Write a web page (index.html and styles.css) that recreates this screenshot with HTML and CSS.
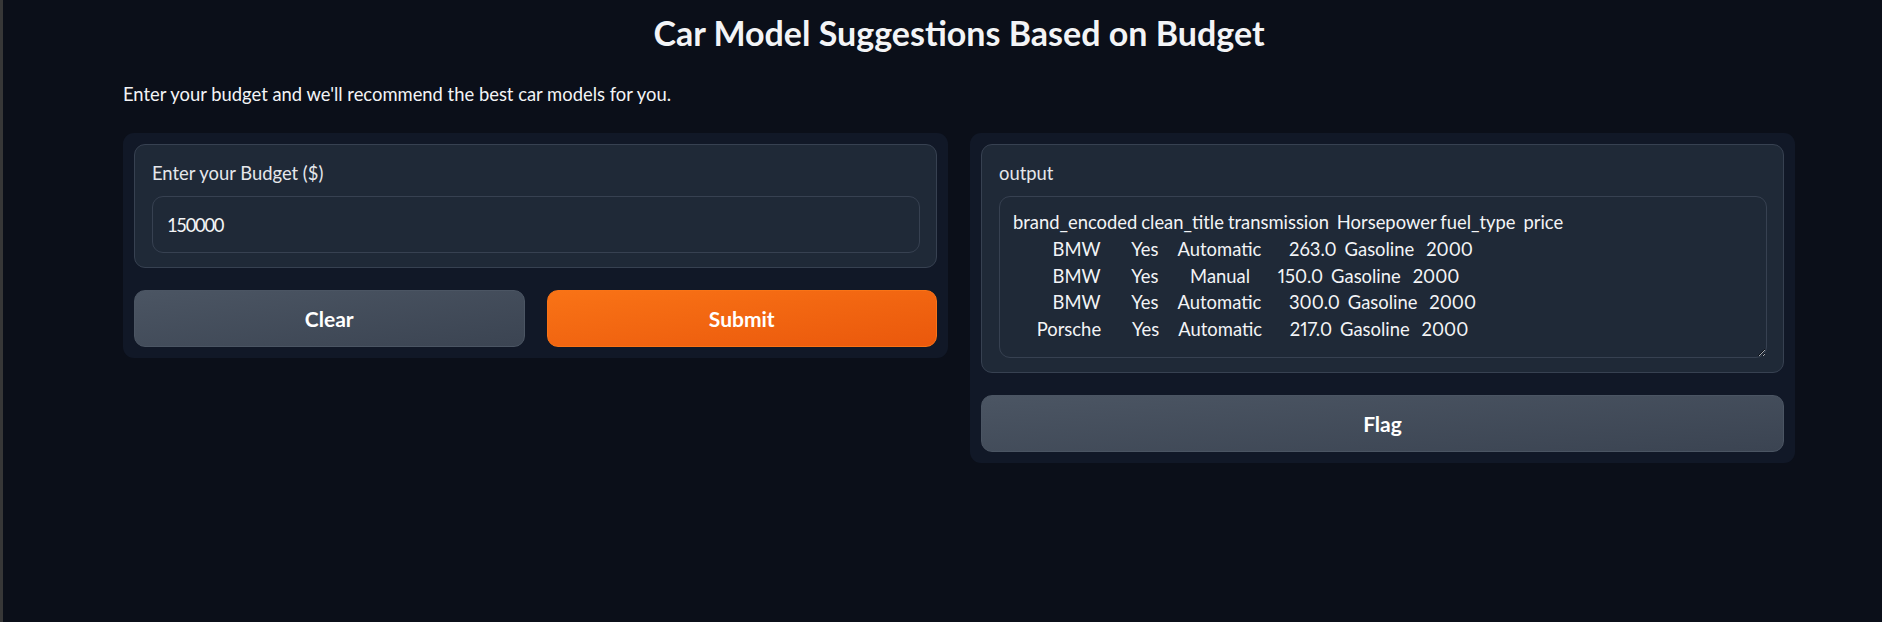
FILE: index.html
```html
<!DOCTYPE html>
<html lang="en">
<head>
<meta charset="utf-8">
<title>Car Model Suggestions Based on Budget</title>
<link rel="stylesheet" href="styles.css">
</head>
<body>
<div class="app">
  <h1 class="title">Car Model Suggestions Based on Budget</h1>
  <p class="desc">Enter your budget and we'll recommend the best car models for you.</p>
  <div class="row">
    <div class="panel">
      <div class="block">
        <label class="label" for="budget">Enter your Budget ($)</label>
        <input class="input" id="budget" type="text" value="150000">
      </div>
      <div class="btn-row">
        <button class="btn btn-secondary">Clear</button>
        <button class="btn btn-primary">Submit</button>
      </div>
    </div>
    <div class="panel">
      <div class="block">
        <label class="label" for="output">output</label>
        <textarea class="textarea" id="output" readonly>
brand_encoded clean_title transmission  Horsepower fuel_type  price
          BMW        Yes     Automatic       263.0  Gasoline   2000
          BMW        Yes        Manual       150.0  Gasoline   2000
          BMW        Yes     Automatic       300.0  Gasoline   2000
      Porsche        Yes     Automatic       217.0  Gasoline   2000</textarea>
      </div>
      <button class="btn btn-secondary btn-full">Flag</button>
    </div>
  </div>
</div>
</body>
</html>
```

FILE: styles.css
```css
html, body {
  margin: 0;
  padding: 0;
}
body {
  background: #0b0f19;
  border-left: 3px solid #373737;
  min-height: 622px;
  box-sizing: border-box;
  font-family: Lato, "Liberation Sans", sans-serif;
  color: #f3f4f6;
}
.app {
  width: 1672px;
  margin-left: 120px;
  padding-top: 13px;
}
.title {
  margin: 0;
  text-align: center;
  font-size: 34px;
  line-height: 40px;
  font-weight: 700;
  color: #f3f4f6;
}
.desc {
  margin: 28px 0 0 0;
  font-size: 18.4px;
  line-height: 26px;
  color: #f3f4f6;
}
.row {
  margin-top: 26px;
  display: flex;
  gap: 22px;
  align-items: flex-start;
}
.panel {
  flex: 1 1 0;
  background: #111827;
  border-radius: 11px;
  padding: 11px;
  display: flex;
  flex-direction: column;
  gap: 22px;
}
.block {
  background: #1f2937;
  border: 1px solid #374151;
  border-radius: 11px;
  padding: 15px 16px 14px 17px;
  display: flex;
  flex-direction: column;
}
.label {
  display: block;
  font-size: 18.4px;
  line-height: 26px;
  color: #e5e7eb;
  margin-bottom: 10px;
}
.input {
  box-sizing: border-box;
  height: 57px;
  width: 100%;
  margin: 0;
  padding: 0 14px;
  background: #1f2937;
  border: 1px solid #374151;
  border-radius: 11px;
  color: #f3f4f6;
  font-family: Lato, "Liberation Sans", sans-serif;
  font-size: 18.4px;
  letter-spacing: -1.3px;
  outline: none;
}
.textarea {
  box-sizing: border-box;
  display: block;
  width: 100%;
  height: 162px;
  margin: 0;
  padding: 12px 13px;
  background: #1f2937;
  border: 1px solid #374151;
  border-radius: 11px;
  color: #f3f4f6;
  font-family: Lato, "Liberation Sans", sans-serif;
  font-size: 18.4px;
  line-height: 26.75px;
  word-spacing: -0.75px;
  font-variant-numeric: proportional-nums;
  white-space: pre;
  overflow: hidden;
  resize: vertical;
  outline: none;
}
.btn-row {
  display: flex;
  gap: 22px;
}
.btn {
  flex: 1 1 0;
  height: 57px;
  border-radius: 11px;
  font-family: Lato, "Liberation Sans", sans-serif;
  font-size: 21px;
  font-weight: 700;
  color: #ffffff;
  cursor: pointer;
  padding: 0;
}
.btn-full {
  flex: none;
  width: 100%;
}
.btn-secondary {
  background: linear-gradient(to bottom right, #4b5563, #3b4452);
  border: 1px solid #4b5563;
}
.btn-primary {
  background: linear-gradient(to bottom right, #f97316, #ea580c);
  border: 1px solid #f97316;
}
```
